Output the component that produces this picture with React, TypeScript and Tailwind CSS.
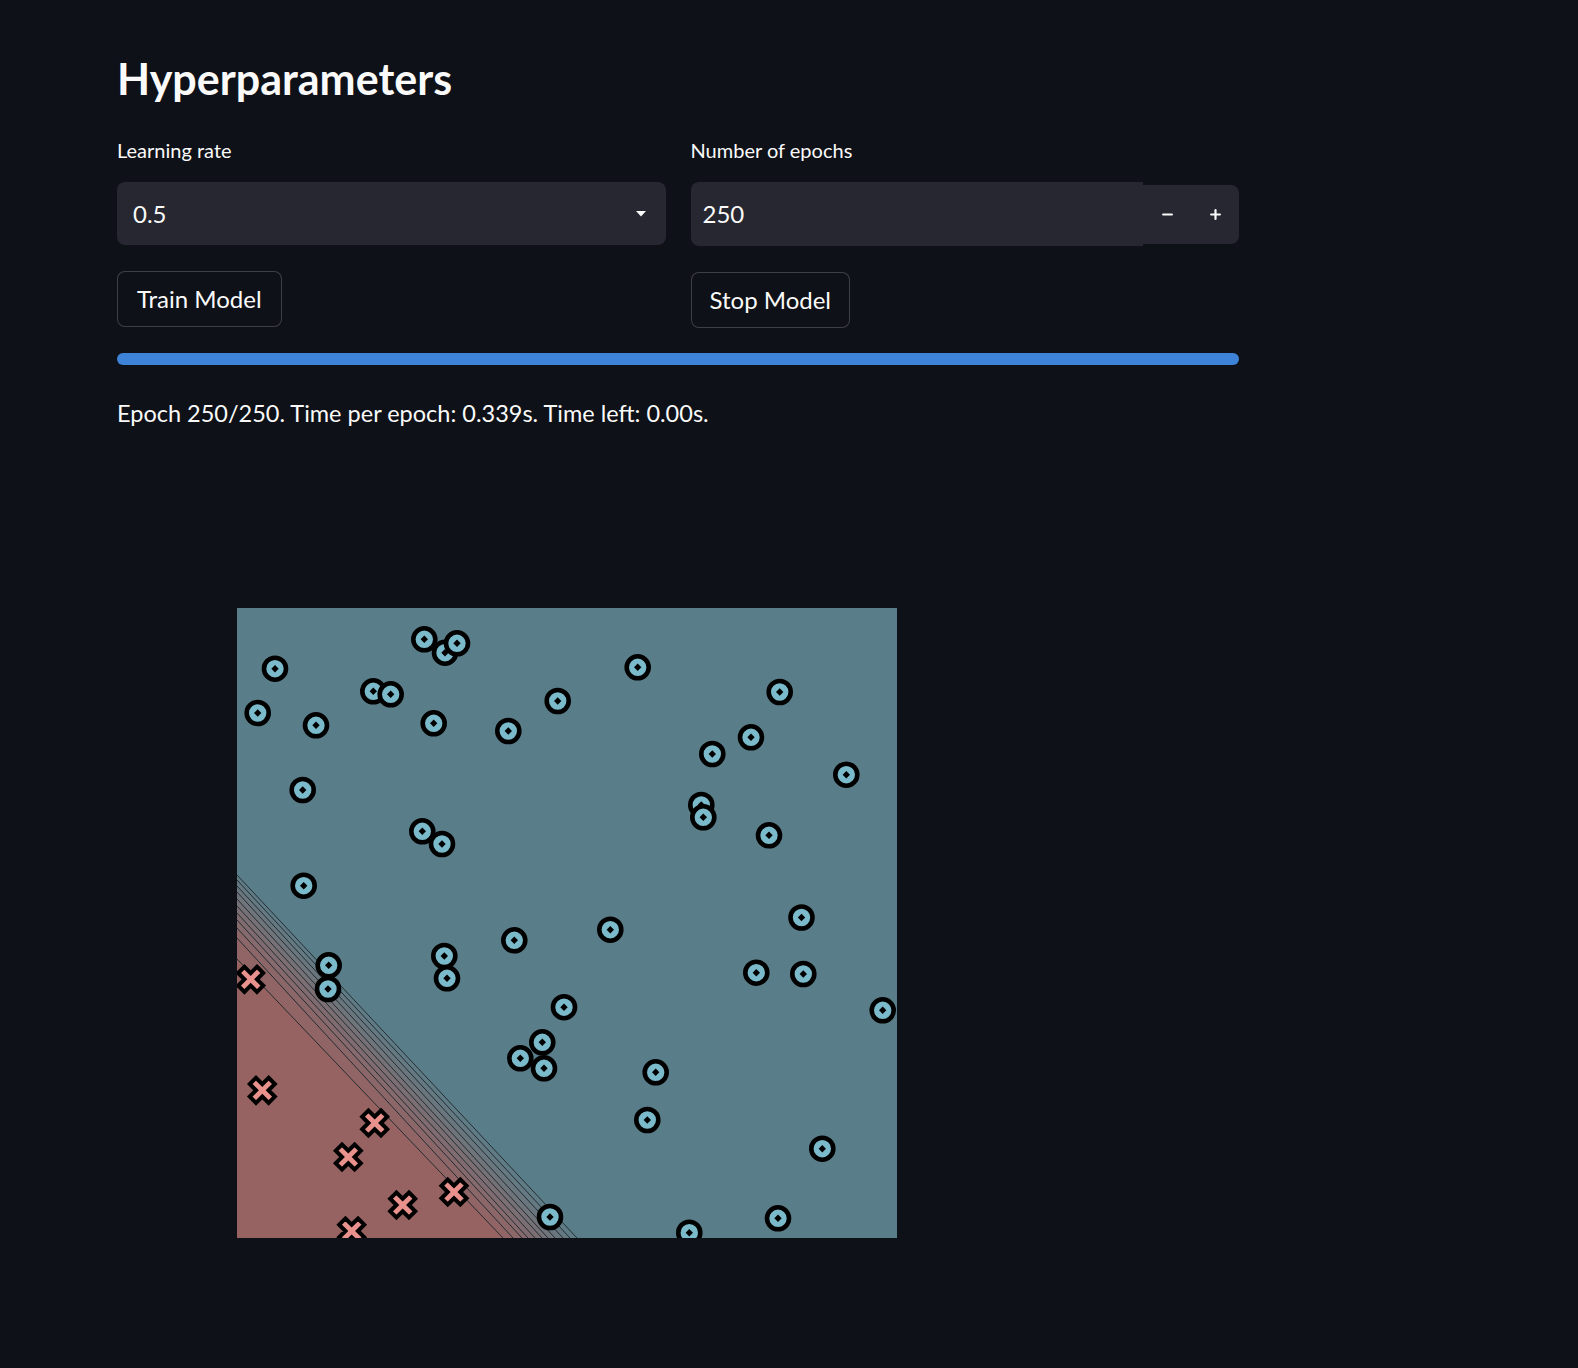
import { Minus, Plus } from 'lucide-react';

// decision-boundary colours (rgb) and the contour lines, plot-relative px
const RED = [150, 98, 98];
const BLUE = [90, 126, 137];
const leftY = [351, 330, 320, 312, 305, 298, 291, 284, 278, 272, 267];
const bottomX = [266, 276, 285, 291, 298, 305, 311, 318, 326, 333, 340];

const circles: [number, number][] = [
  [208, 44.7], [187.3, 31.3], [220, 35.3],
  [38, 60.7], [20.7, 105], [79, 117.3],
  [136.3, 83.3], [153.7, 86.3], [196.7, 115.3], [271.3, 123], [320.7, 93],
  [65.7, 182], [185.3, 223.3], [205, 236], [66.7, 277.7],
  [400.7, 59.3], [542.7, 84], [514, 129.3], [475.3, 146], [609.3, 166.7],
  [464.3, 197], [466.3, 209.3], [532, 227.3],
  [564.5, 309.5], [373.3, 321.7], [519.3, 364.7], [566.3, 366], [645.7, 402.3],
  [327, 399.2], [418.7, 464.3], [410.3, 512], [585.3, 540.7], [541, 610.3],
  [452.3, 624.7], [313, 609],
  [91.7, 357.3], [91, 381], [207.3, 348], [210, 370.3], [277.3, 332.3],
  [305.3, 434.3], [283.3, 450.3], [307, 460.3],
];

const crosses: [number, number][] = [
  [13.7, 371.3], [25.3, 482.3], [137.7, 515], [111.3, 549],
  [217, 584], [165.7, 597], [114.7, 623],
];

const W = 660;
const H = 630;

function mix(t: number) {
  const c = RED.map((r, i) => Math.round(r + (BLUE[i] - r) * t));
  return `rgb(${c.join(',')})`;
}

function DecisionPlot() {
  const n = leftY.length;
  const bands = [];
  // red region under the innermost line
  bands.push(
    <polygon key="red" points={`0,${leftY[0]} ${bottomX[0]},${H} 0,${H}`} fill={mix(0)} />
  );
  for (let i = 0; i < n - 1; i++) {
    bands.push(
      <polygon
        key={`b${i}`}
        points={`0,${leftY[i]} ${bottomX[i]},${H} ${bottomX[i + 1]},${H} 0,${leftY[i + 1]}`}
        fill={mix((i + 1) / n)}
      />
    );
  }

  return (
    <svg width={W} height={H} viewBox={`0 0 ${W} ${H}`} className="block">
      <rect width={W} height={H} fill={mix(1)} />
      {bands}
      {leftY.map((y, i) => (
        <line key={`l${i}`} x1={0} y1={y} x2={bottomX[i]} y2={H} stroke="#1f2629" strokeWidth="1" opacity="0.9" />
      ))}
      {circles.map(([x, y], i) => (
        <g key={`c${i}`} transform={`translate(${x} ${y})`}>
          <circle r="11" fill="#7abaca" stroke="#000" strokeWidth="4.6" />
          <rect x="-2.6" y="-2.6" width="5.2" height="5.2" transform="rotate(45)" fill="#000" />
        </g>
      ))}
      {crosses.map(([x, y], i) => (
        <g key={`x${i}`} transform={`translate(${x} ${y}) rotate(45)`}>
          <polygon
            points="-4.4,-13.3 4.4,-13.3 4.4,-4.4 13.3,-4.4 13.3,4.4 4.4,4.4 4.4,13.3 -4.4,13.3 -4.4,4.4 -13.3,4.4 -13.3,-4.4 -4.4,-4.4"
            fill="#e9928d"
            stroke="#000"
            strokeWidth="4"
          />
        </g>
      ))}
    </svg>
  );
}

export default function App() {
  return (
    <div
      className="min-h-screen bg-[#0e1117] text-[#fafafa] pl-[117px] pt-[54px]"
      style={{ fontFamily: 'Lato, "Liberation Sans", sans-serif' }}
    >
      <div className="w-[1122px]">
        <h2 className="text-[43px] leading-[50px] font-bold">Hyperparameters</h2>

        {/* Inputs */}
        <div className="mt-[31px] grid grid-cols-2 gap-x-[25px]">
          <div>
            <label className="block text-[20px] leading-[30px]">Learning rate</label>
            <div className="mt-[17px] h-[63px] rounded-lg bg-[#262730] flex items-center justify-between pl-4 pr-5">
              <span className="text-[24px]">0.5</span>
              <svg width="10" height="6" viewBox="0 0 10 6">
                <path d="M0 0 H10 L5 5.5 Z" fill="#fafafa" />
              </svg>
            </div>
            <button className="mt-[26px] h-[56px] px-[19px] rounded-lg border border-[#fafafa]/20 bg-[#0e1117] text-[24px]">
              Train Model
            </button>
          </div>

          <div>
            <label className="block text-[20px] leading-[30px]">Number of epochs</label>
            <div className="mt-[17px] flex items-center">
              <div className="flex-1 h-[64px] rounded-l-lg bg-[#262730] flex items-center pl-3 text-[24px]">250</div>
              <div className="h-[59px] w-[96px] rounded-r-lg bg-[#262730] flex">
                <div className="w-12 flex items-center justify-center">
                  <Minus className="w-[15px] h-[15px]" strokeWidth={3.5} />
                </div>
                <div className="w-12 flex items-center justify-center">
                  <Plus className="w-[15px] h-[15px]" strokeWidth={3.5} />
                </div>
              </div>
            </div>
            <button className="mt-[26px] h-[56px] px-[18px] rounded-lg border border-[#fafafa]/20 bg-[#0e1117] text-[24px]">
              Stop Model
            </button>
          </div>
        </div>

        {/* Progress */}
        <div className="mt-[25px] h-3 rounded-full bg-[#3d84d9]" />

        <p className="mt-[30px] text-[23.5px] leading-[36px]">
          Epoch 250/250. Time per epoch: 0.339s. Time left: 0.00s.
        </p>

        <div className="mt-[177px] ml-[120px]">
          <DecisionPlot />
        </div>
      </div>
    </div>
  );
}
